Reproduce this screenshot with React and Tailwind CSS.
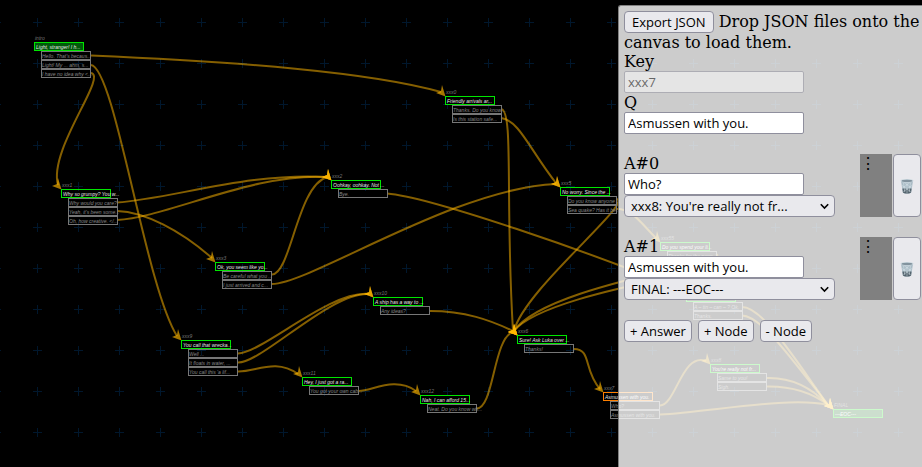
import { useState } from "react";

const nodes = [
  { id: "intro", x: 34, y: 42, q: "Light, stranger! I h...", answers: ["Hello. That's becaus...", "Light! My ... ahm, s...", "I have no idea why <..."], kind: "start" },
  { id: "xxx1", x: 61, y: 189, q: "Why so grumpy? You w...", answers: ["Why would you care?", "Yeah, it's been some...", "Oh, how creative. </..."] },
  { id: "xxx2", x: 331, y: 180, q: "Oohkay, oohkay. Not ...", answers: ["Bye."] },
  { id: "xxx3", x: 215, y: 262, q: "Ok, you seem like yo...", answers: ["Be careful what you ...", "I just arrived and c..."] },
  { id: "xxx0", x: 445, y: 96, q: "Friendly arrivals ar...", answers: ["Thanks. Do you know ...", "Is this station safe..."] },
  { id: "xxx5", x: 560, y: 187, q: "No worry. Since the ...", answers: ["Do you know anyone ...", "Sea quake? Has it be..."] },
  { id: "xxx6", x: 517, y: 335, q: "Sure! Ask Luka over ...", answers: ["Thanks!"] },
  { id: "xxx9", x: 181, y: 340, q: "You call that wrecka...", answers: ["Well ...", "It floats in water, ...", "You call this 'a lif..."] },
  { id: "xxx10", x: 373, y: 297, q: "A ship has a way to ...", answers: ["Any ideas?"] },
  { id: "xxx11", x: 302, y: 377, q: "Hey, I just got a ra...", answers: ["You got your own cab..."] },
  { id: "xxx12", x: 420, y: 395, q: "Nah, I can afford 15...", answers: ["Neat. Do you know wh..."] },
  { id: "xxx55", x: 660, y: 242, q: "Do you spend your li...", answers: ["Thanks for the news.", "Bye."] },
  { id: "xxx4", x: 686, y: 293, q: "A tin can?", answers: ["A – tin – can – ? Ok.", "Thanks."] },
  { id: "xxx7", x: 603, y: 392, q: "Asmussen with you.", answers: ["Who?", "Asmussen with you."], kind: "selected" },
  { id: "xxx8", x: 710, y: 364, q: "You're really not fr...", answers: ["Same to you!", "Sigh."] },
  { id: "FINAL", x: 833, y: 409, q: "---EOC---", answers: [], kind: "final" },
];

const edges = [
  { to: "xxx0", d: "M91 55.5C240 62 370 72 441 92" },
  { to: "xxx9", d: "M91 65C115 68 145 285 177 336" },
  { to: "xxx1", d: "M91 73C108 76 48 150 58 185" },
  { to: "xxx2", d: "M117 202.5C170 199 250 172 327 177" },
  { to: "xxx3", d: "M117 211C145 212 180 230 212 258" },
  { to: "xxx2", d: "M117 220C165 218 255 172 327 177" },
  { to: "xxx2", d: "M272 274.5C291 274 297 186 327 177" },
  { to: "xxx5", d: "M272 284C312 283 455 188 556 184" },
  { to: "xxx4", d: "M387 193.5C430 197 590 252 682 290" },
  { to: "xxx6", d: "M501 109C514 110 505 200 513 331" },
  { to: "xxx5", d: "M501 118C519 120 530 150 556 183" },
  { to: "xxx6", d: "M617 199C632 204 524 290 514 331" },
  { to: "xxx55", d: "M617 209C632 209 640 222 656 238" },
  { to: "xxx6", d: "M716 254C735 262 545 285 514 331" },
  { to: "xxx6", d: "M716 263C735 270 545 292 514 331" },
  { to: "xxx6", d: "M430 311C465 311 490 320 513 331" },
  { to: "xxx6", d: "M476 408.5C494 410 493 338 513 332" },
  { to: "xxx7", d: "M574 349C592 349 583 370 600 389" },
  { to: "xxx10", d: "M238 353.5C264 352 330 290 369 294" },
  { to: "xxx10", d: "M238 362.5C262 363 330 292 369 294" },
  { to: "xxx11", d: "M238 371.5C256 372 275 358 298 374" },
  { to: "xxx12", d: "M359 391C372 391 395 376 416 391" },
  { to: "FINAL", d: "M742 307C762 307 790 352 828 405" },
  { to: "FINAL", d: "M742 315.5C760 316 785 350 828 405" },
  { to: "xxx8", d: "M660 405.5C676 405 682 352 706 361" },
  { to: "FINAL", d: "M660 414.5C710 412 790 396 828 405" },
  { to: "FINAL", d: "M766 378C790 377 810 386 828 405" },
  { to: "FINAL", d: "M766 386.5C790 386 810 391 828 405" },
];

const boxStyles = {
  start: "border-[#00e600] bg-[#005a0a]",
  selected: "border-[#ff8000]",
  final: "border-[#00e600] bg-[#005a0a]",
};

const control = "h-[22px] border border-[#8f8f9d] font-['Open_Sans','Noto_Sans',sans-serif] text-[13px] leading-[20px] text-black";
const buttonStyle = `${control} rounded-[4px] bg-[#e9e9ed] hover:bg-[#d0d0d7]`;
const inputStyle = `${control} block w-[180px] rounded-[2px] bg-white px-[3px]`;

function Edges() {
  return (
    <svg className="absolute inset-0 h-full w-full" aria-hidden="true">
      <defs>
        <pattern id="grid" x="16" y="2" width="41" height="41" patternUnits="userSpaceOnUse">
          <path d="M17 20.5h9M21.5 16v9" stroke="#00172d" strokeWidth="1" />
        </pattern>
      </defs>
      <rect width="100%" height="100%" fill="url(#grid)" />
      {edges.map(({ to, d }, i) => {
        const { x, y } = nodes.find((n) => n.id === to);
        return (
          <g key={i}>
            <path d={d} fill="none" stroke="#ffb700" strokeWidth="2" opacity="0.52" />
            <path d={`M${x + 0.5} ${y + 0.5}l-9.5-3.5 5-2 1-6z`} fill="#ffb700" opacity="0.65" />
          </g>
        );
      })}
    </svg>
  );
}

function Node({ node }) {
  return (
    <div
      className="absolute w-[50px] whitespace-nowrap font-['Liberation_Sans',sans-serif] text-[5px] leading-[8px] italic"
      style={{ left: node.x, top: node.y - 8 }}
    >
      <div className="h-2 pl-px text-[#777]">{node.id}</div>
      <div className={`h-[9px] border pl-px text-[#e8e8e8] ${boxStyles[node.kind] || "border-[#00e600]"}`}>{node.q}</div>
      {node.answers.map((a, i) => (
        <div key={i} className="-mr-[7px] ml-[7px] h-[9px] border border-[#777] text-[#888]">
          {a}
        </div>
      ))}
    </div>
  );
}

function TrashIcon() {
  return (
    <svg width="14" height="16" viewBox="0 0 14 16" aria-hidden="true">
      <path d="M1 3l1.8 11.2c.3 1.7 8.1 1.7 8.4 0L13 3z" fill="#a9bbc5" />
      <path d="M2.4 10.5l.5 3.7c.3 1.7 7.9 1.7 8.2 0l.5-3.7z" fill="#53636d" />
      <path d="M3.5 5l1.3 9M7 5v10M10.5 5l-1.3 9M2 7.5l8.5 6M12 7.5l-8.5 6M4.5 5l7 5M9.5 5l-7 5" stroke="#d9e4ea" strokeWidth=".5" />
      <ellipse cx="7" cy="2.8" rx="6.5" ry="1.9" fill="#c9d6dd" />
      <ellipse cx="7" cy="2.9" rx="5.3" ry="1.1" fill="#82939e" />
    </svg>
  );
}

function Answer({ index, answer }) {
  const [text, setText] = useState(answer.text);
  return (
    <div className="mt-5 flex justify-between pr-px">
      <div>
        <label htmlFor={`answer-${index}`} className="block leading-[19px]">A#{index}</label>
        <input id={`answer-${index}`} className={inputStyle} value={text} onChange={(e) => setText(e.target.value)} />
        <div className="relative w-[211px]">
          <select
            aria-label={`Target of answer ${index}`}
            defaultValue={answer.target}
            className={`${buttonStyle} block w-full appearance-none pr-6 pl-[6px]`}
          >
            <option value="xxx8">xxx8: You're really not fr...</option>
            <option value="FINAL">FINAL: ---EOC---</option>
          </select>
          <svg className="pointer-events-none absolute top-2 right-[6px]" width="9" height="7" viewBox="0 0 9 7" fill="none" stroke="#000" strokeWidth="1.6">
            <path d="M.8 1.2l3.7 3.9 3.7-3.9" />
          </svg>
        </div>
      </div>
      <div className="flex">
        <div className="flex w-8 cursor-move bg-[#808080] leading-[19px]">
          <span className="flex w-4 justify-center">⋮</span>
        </div>
        <button aria-label={`Delete answer ${index}`} className="ml-px flex w-7 items-center justify-center rounded-[4px] border border-[#8f8f9d] bg-[#e9e9ed]">
          <TrashIcon />
        </button>
      </div>
    </div>
  );
}

export default function App() {
  const [question, setQuestion] = useState("Asmussen with you.");
  return (
    <main className="relative flex min-h-screen justify-end overflow-hidden bg-black pt-[5px]">
      <div className="absolute inset-0">
        <Edges />
        {nodes.map((n) => (
          <Node key={n.id} node={n} />
        ))}
      </div>

      <aside className="relative w-[304px] rounded-tl-[3px] border-t border-l border-[#808080] bg-white/80 pt-[5px] pl-[5px] font-['DejaVu_Serif',serif] text-base leading-[19px] text-black">
        <p>
          <button className={`${buttonStyle} mr-[5px] px-[7px] align-middle`}>Export JSON</button>
          Drop JSON files onto the canvas to load them.
        </p>
        <label htmlFor="key" className="block">Key</label>
        <input id="key" disabled value="xxx7" className={`${inputStyle} opacity-50`} />
        <label htmlFor="question" className="block">Q</label>
        <input id="question" className={inputStyle} value={question} onChange={(e) => setQuestion(e.target.value)} />

        <Answer index={0} answer={{ text: "Who?", target: "xxx8" }} />
        <Answer index={1} answer={{ text: "Asmussen with you.", target: "FINAL" }} />

        <div className="mt-5 flex gap-[6px]">
          <button className={`${buttonStyle} px-[5px]`}>+ Answer</button>
          <button className={`${buttonStyle} px-[5px]`}>+ Node</button>
          <button className={`${buttonStyle} px-[5px]`}>- Node</button>
        </div>
      </aside>
    </main>
  );
}
